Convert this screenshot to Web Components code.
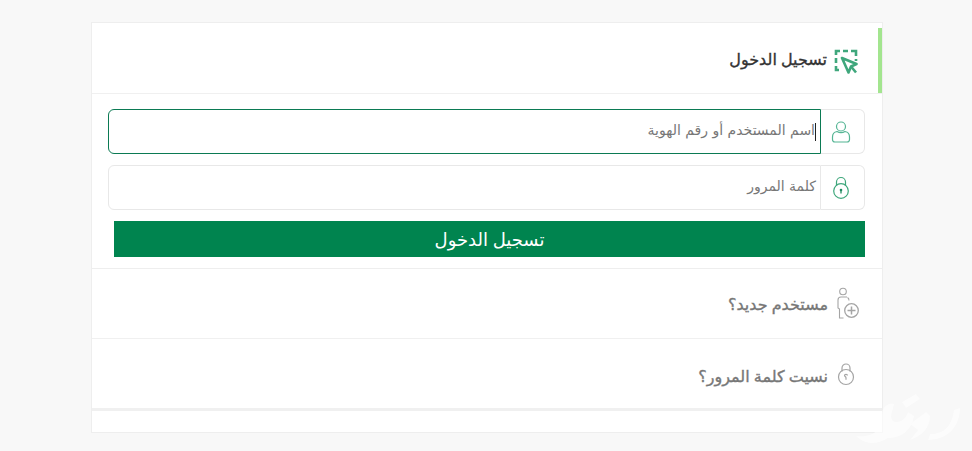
<!DOCTYPE html>
<html lang="ar" dir="rtl">
<head>
<meta charset="utf-8">
<title>تسجيل الدخول</title>
<style>
    html, body { margin: 0; height: 100%; overflow: hidden; }
    body {
        background: #f8f8f8;
        font-family: "Noto Sans", "DejaVu Sans", sans-serif;
        padding: 22px 89px 0 91px;
        box-sizing: border-box;
        position: relative;
    }
</style>
</head>
<body>
<login-card>
    <panel-head title="تسجيل الدخول">
        <svg slot="icon" width="24" height="28" viewBox="0 0 24 28" fill="none" stroke="#3fa77c" stroke-width="2.600">
            <path d="M2 6V2h4M9 2h5M17 2h5v5M22 10v2M2 9v5M2 17v4h3" />
            <path d="M8 9l14.500 6-5.500 2.500-2.500 6z" stroke-linejoin="round" />
            <path d="M17 17.500l5 6" />
        </svg>
    </panel-head>

    <login-form>
        <input-row label="اسم المستخدم أو رقم الهوية" focused>
            <svg slot="icon" width="20" height="24" viewBox="0 0 20 24" fill="none" stroke="#55b594" stroke-width="1.200">
                <circle cx="10" cy="6.500" r="4.500" />
                <path d="M6 11.500C3 12 1.500 14 1.500 17v2.500c0 1.500 1 2.500 2.500 2.500h12c1.500 0 2.500-1 2.500-2.500V17c0-3-1.500-5-4.500-5.500-2.500 1.500-5.500 1.500-8 0z" />
            </svg>
        </input-row>
        <input-row label="كلمة المرور">
            <svg slot="icon" width="18" height="24" viewBox="0 0 18 24" fill="none" stroke="#3fa77c" stroke-width="1.200">
                <path d="M4.500 9.500V6a4.500 4.500 0 0 1 9 0v3.500" />
                <circle cx="9" cy="15" r="7.300" />
                <circle cx="9" cy="14" r="1.300" fill="#1f8a60" stroke="none" />
                <path d="M9 14v3.500" stroke="#1f8a60" stroke-width="1.300" />
            </svg>
        </input-row>
        <green-button>تسجيل الدخول</green-button>
    </login-form>

    <link-row label="مستخدم جديد؟">
        <svg slot="icon" width="24" height="33" viewBox="0 0 24 33" fill="none" stroke="#a5a5a5" stroke-width="1.100">
            <circle cx="7" cy="4.500" r="3.300" />
            <path d="M11 10H5c-2 0-3 1-3 3v8l1.500 1v9h4" />
            <path d="M11.500 10.500c1 .5 1.500 1.500 1.500 3" />
            <circle cx="15.500" cy="23.500" r="6.800" stroke-width="1.300" />
            <path d="M15.500 19.500v8M11.500 23.500h8" stroke-width="1.500" />
        </svg>
    </link-row>
    <link-row label="نسيت كلمة المرور؟" class="low">
        <svg slot="icon" width="18" height="24" viewBox="0 0 18 24" fill="none" stroke="#a5a5a5" stroke-width="1.200">
            <path d="M5 9.500V6a4 4 0 0 1 8 0v3.500" />
            <circle cx="9" cy="15" r="7.500" />
            <path d="M10.500 13.500c0-1.600-3-1.600-3 0 0 .9 1.500 1 1.500 2.200v2" />
        </svg>
    </link-row>
    <card-foot></card-foot>
</login-card>
<brand-mark></brand-mark>

<script>
class LoginCard extends HTMLElement {
    constructor() {
        super();
        this.attachShadow({ mode: "open" });
        this.shadowRoot.innerHTML = `
            <style>
                :host {
                    display: block;
                    width: 792px;
                    background: #fff;
                    border: 1px solid #eeeeee;
                    box-sizing: border-box;
                }
            </style>
            <slot></slot>
        `;
    }
}

class PanelHead extends HTMLElement {
    constructor() {
        super();
        this.attachShadow({ mode: "open" });
        this.shadowRoot.innerHTML = `
            <style>
                :host {
                    display: block;
                    padding-top: 5px;
                    border-bottom: 1px solid #f0f0f0;
                }
                .head {
                    height: 65px;
                    display: flex;
                    align-items: center;
                    gap: 7px;
                    padding-right: 20px;
                    border-right: 4px solid #a3e58f;
                    color: #333;
                    font-size: 16px;
                    -webkit-text-stroke: .35px #333;
                }
                .icon { display: flex; margin-top: 4px; }
                .title { margin-top: -3px; }
            </style>
            <div class="head">
                <span class="icon"><slot name="icon"></slot></span>
                <span class="title"></span>
            </div>
        `;
    }

    connectedCallback() {
        this.shadowRoot.querySelector(".title").textContent = this.getAttribute("title");
        this.removeAttribute("title");
    }
}

class LoginForm extends HTMLElement {
    constructor() {
        super();
        this.attachShadow({ mode: "open" });
        this.shadowRoot.innerHTML = `
            <style>
                :host {
                    display: flex;
                    flex-direction: column;
                    gap: 11px;
                    padding: 15px 17px 11px 16px;
                    border-bottom: 1px solid #eeeeee;
                }
            </style>
            <slot></slot>
        `;
    }
}

class InputRow extends HTMLElement {
    constructor() {
        super();
        this.attachShadow({ mode: "open" });
        this.shadowRoot.innerHTML = `
            <style>
                :host {
                    display: flex;
                    height: 45px;
                    box-sizing: border-box;
                }
                .addon {
                    width: 44px;
                    flex: none;
                    box-sizing: border-box;
                    display: flex;
                    align-items: center;
                    justify-content: center;
                    padding-right: 3px;
                    border: 1px solid #e8e8e8;
                    border-left: 0;
                    border-radius: 0 6px 6px 0;
                    background: #fff;
                }
                .field {
                    flex: 1;
                    display: flex;
                    align-items: center;
                    padding-right: 4px;
                    border: 1px solid #e8e8e8;
                    border-radius: 6px 0 0 6px;
                    color: #777;
                    font-family: "DejaVu Sans", sans-serif;
                    font-size: 14px;
                }
                .label { margin-top: -3px; }
                :host([focused]) .field {
                    border-color: #0b7a53;
                }
                :host([focused]) .field::before {
                    content: "";
                    width: 1px;
                    height: 18px;
                    background: #222;
                }
            </style>
            <div class="addon"><slot name="icon"></slot></div>
            <div class="field"><span class="label"></span></div>
        `;
    }

    connectedCallback() {
        this.shadowRoot.querySelector(".label").textContent = this.getAttribute("label");
    }
}

class GreenButton extends HTMLElement {
    constructor() {
        super();
        this.attachShadow({ mode: "open" });
        this.shadowRoot.innerHTML = `
            <style>
                :host {
                    display: flex;
                    align-items: center;
                    justify-content: center;
                    height: 36px;
                    margin-left: 6px;
                    background: #00844f;
                    color: #fff;
                    font-size: 18px;
                }
            </style>
            <slot></slot>
        `;
    }
}

class LinkRow extends HTMLElement {
    constructor() {
        super();
        this.attachShadow({ mode: "open" });
        this.shadowRoot.innerHTML = `
            <style>
                :host {
                    display: flex;
                    align-items: center;
                    gap: 8px;
                    height: 70px;
                    box-sizing: border-box;
                    padding-right: 22px;
                    border-bottom: 1px solid #f0f0f0;
                    color: #777;
                    font-size: 16px;
                    -webkit-text-stroke: .35px #777;
                }
                .icon { display: flex; width: 24px; justify-content: center; }
                :host(.low) .icon { padding-right: 4px; width: 20px; }
                :host(.low) .label { margin-top: 5px; }
            </style>
            <span class="icon"><slot name="icon"></slot></span>
            <span class="label"></span>
        `;
    }

    connectedCallback() {
        this.shadowRoot.querySelector(".label").textContent = this.getAttribute("label");
    }
}

class CardFoot extends HTMLElement {
    constructor() {
        super();
        this.attachShadow({ mode: "open" });
        this.shadowRoot.innerHTML = `
            <style>
                :host {
                    display: block;
                    height: 21px;
                    border-top: 2px solid #f0f0f0;
                }
            </style>
        `;
    }
}

// faint watermark in the bottom corner, lies over the page
class BrandMark extends HTMLElement {
    constructor() {
        super();
        this.attachShadow({ mode: "open" });
        this.shadowRoot.innerHTML = `
            <style>
                :host {
                    position: absolute;
                    right: 10px;
                    bottom: 5px;
                    width: 110px;
                    height: 56px;
                    pointer-events: none;
                }
            </style>
            <svg width="110" height="56" viewBox="0 0 110 56" fill="#fff" opacity=".6">
                <path d="M4 46C24 48 30 38 30 24c0-6 6-12 12-10l-2 8c-2 6 0 10 4 10 6 0 10-4 12-10l6 4c-2 14-12 22-26 22C24 56 12 54 4 46z" />
                <path d="M50 12l14-8 4 5-14 9zM58 34l16-12 4 4c0 12-8 20-20 24l8-10z" />
                <path d="M78 44c14 0 22-8 24-24l6-2c0 18-12 32-32 32z" />
            </svg>
        `;
    }
}

customElements.define("login-card", LoginCard);
customElements.define("panel-head", PanelHead);
customElements.define("login-form", LoginForm);
customElements.define("input-row", InputRow);
customElements.define("green-button", GreenButton);
customElements.define("link-row", LinkRow);
customElements.define("card-foot", CardFoot);
customElements.define("brand-mark", BrandMark);
</script>
</body>
</html>
